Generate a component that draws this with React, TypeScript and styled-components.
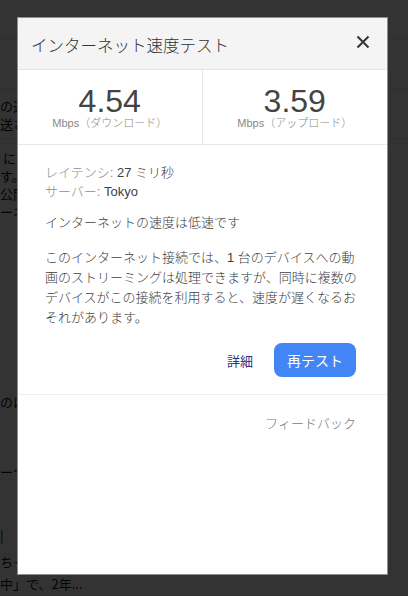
import React from "react";
import styled, { createGlobalStyle } from "styled-components";

const GlobalStyle = createGlobalStyle`
  html, body {
    margin: 0;
    padding: 0;
    background: #ffffff;
  }
  body {
    font-family: "Liberation Sans", Arial, "Noto Sans CJK JP", sans-serif;
  }
`;

// page behind the modal: only its left strip peeks out past the dialog
const BG_ROWS: { kind: "rule" | "text"; mt: number; text?: string }[] = [
  { kind: "rule", mt: 38 },
  { kind: "rule", mt: 50 },
  { kind: "text", mt: 7, text: "の送" },
  { kind: "text", mt: 0, text: "送さ" },
  { kind: "rule", mt: 5 },
  { kind: "text", mt: 10, text: " に" },
  { kind: "text", mt: 0, text: "す。" },
  { kind: "text", mt: 0, text: "公開" },
  { kind: "text", mt: 0, text: "ーネ" },
  { kind: "text", mt: 172, text: "のに" },
  { kind: "text", mt: 52, text: "ーつ" },
  { kind: "text", mt: 46, text: "|" },
  { kind: "text", mt: 8, text: "ちっ" },
  { kind: "text", mt: 4, text: "中」で、2年..." },
];

const Page = styled.div`
  display: flex;
  flex-direction: column;
  height: 596px;
  overflow: hidden;
  font-family: "Noto Sans CJK JP", sans-serif;
  color: #111;
`;

const BgRule = styled.div<{ $mt: number }>`
  margin-top: ${(p) => p.$mt}px;
  height: 1px;
  background: #e6e6e6;
`;

const BgText = styled.div<{ $mt: number }>`
  margin-top: ${(p) => p.$mt}px;
  font-size: 13px;
  line-height: 18px;
  white-space: pre;
`;

const Backdrop = styled.div`
  position: fixed;
  inset: 0;
  background: rgba(0, 0, 0, 0.8);
  padding: 17px 0 0 17px;
  box-sizing: border-box;
`;

const Dialog = styled.div`
  width: 371px;
  height: 558px;
  box-sizing: border-box;
  background: #ffffff;
  border: 1px solid #8e8e8e;
  display: flex;
  flex-direction: column;
  font-family: "Liberation Sans", Arial, "Noto Sans CJK JP", sans-serif;
  font-weight: 300;
`;

const Header = styled.div`
  display: flex;
  align-items: flex-start;
  justify-content: space-between;
  height: 52px;
  box-sizing: border-box;
  padding: 16px 17px 0 13px;
  background: #f4f4f4;
  border-bottom: 1px solid #e2e2e2;
`;

const Title = styled.h1`
  margin: 0;
  font-size: 16.5px;
  line-height: 24px;
  font-weight: 300;
  color: #333;
`;

const CloseButton = styled.button`
  border: 0;
  padding: 0;
  background: transparent;
  display: flex;
  margin-top: 1px;
  cursor: pointer;
`;

const Stats = styled.div`
  display: grid;
  grid-template-columns: 1fr 1fr;
  height: 74px;
  border-bottom: 1px solid #e8e8e8;
`;

const Stat = styled.div<{ $divider?: boolean }>`
  display: flex;
  flex-direction: column;
  align-items: center;
  padding-top: 15px;
  border-right: ${(p) => (p.$divider ? "1px solid #e8e8e8" : "0")};
`;

const Value = styled.div`
  font-size: 32px;
  line-height: 32px;
  font-weight: 400;
  color: #444;
`;

const Unit = styled.div`
  margin-top: -1px;
  font-size: 11px;
  line-height: 14px;
  color: #888;
`;

const Body = styled.div`
  padding: 18px 27px 17px 27px;
  border-bottom: 1px solid #eeeeee;
  font-size: 13px;
  color: #404040;
`;

const Meta = styled.div`
  line-height: 19px;
`;

const MetaLabel = styled.span`
  color: #8c8c8c;
`;

const Verdict = styled.p`
  margin: 12px 0 0;
  line-height: 20px;
`;

const Description = styled.p`
  margin: 15px 0 0;
  line-height: 20px;
`;

const Actions = styled.div`
  display: flex;
  justify-content: flex-end;
  align-items: center;
  gap: 21px;
  margin-top: 15px;
  padding-right: 4px;
`;

const LinkButton = styled.button`
  border: 0;
  padding: 0;
  background: transparent;
  font-family: inherit;
  font-weight: 400;
  font-size: 13px;
  color: #2b2f86;
  cursor: pointer;
`;

const PrimaryButton = styled.button`
  border: 0;
  height: 34px;
  width: 82px;
  border-radius: 8px;
  background: #4285f4;
  color: #ffffff;
  font-family: inherit;
  font-weight: 400;
  font-size: 14px;
  cursor: pointer;
`;

const Footer = styled.div`
  display: flex;
  justify-content: flex-end;
  padding: 19px 31px 0 0;
`;

const FeedbackLink = styled.a`
  font-size: 13px;
  line-height: 20px;
  color: #777;
  text-decoration: none;
`;

const CloseIcon = () => (
  <svg width="14" height="14" viewBox="0 0 14 14">
    <path d="M1.5 1.5 L12.5 12.5 M12.5 1.5 L1.5 12.5" stroke="#333" strokeWidth="2" fill="none" />
  </svg>
);

export default function App() {
  return (
    <>
      <GlobalStyle />
      <Page>
        {BG_ROWS.map((r, i) =>
          r.kind === "rule" ? (
            <BgRule key={i} $mt={r.mt} />
          ) : (
            <BgText key={i} $mt={r.mt}>
              {r.text}
            </BgText>
          )
        )}
      </Page>
      <Backdrop>
        <Dialog>
          <Header>
            <Title>インターネット速度テスト</Title>
            <CloseButton aria-label="閉じる">
              <CloseIcon />
            </CloseButton>
          </Header>
          <Stats>
            <Stat $divider>
              <Value>4.54</Value>
              <Unit>Mbps（ダウンロード）</Unit>
            </Stat>
            <Stat>
              <Value>3.59</Value>
              <Unit>Mbps（アップロード）</Unit>
            </Stat>
          </Stats>
          <Body>
            <Meta>
              <MetaLabel>レイテンシ: </MetaLabel>27 ミリ秒
            </Meta>
            <Meta>
              <MetaLabel>サーバー: </MetaLabel>Tokyo
            </Meta>
            <Verdict>インターネットの速度は低速です</Verdict>
            <Description>
              このインターネット接続では、1 台のデバイスへの動画のストリーミングは処理できますが、同時に複数のデバイスがこの接続を利用すると、速度が遅くなるおそれがあります。
            </Description>
            <Actions>
              <LinkButton>詳細</LinkButton>
              <PrimaryButton>再テスト</PrimaryButton>
            </Actions>
          </Body>
          <Footer>
            <FeedbackLink href="#">フィードバック</FeedbackLink>
          </Footer>
        </Dialog>
      </Backdrop>
    </>
  );
}
